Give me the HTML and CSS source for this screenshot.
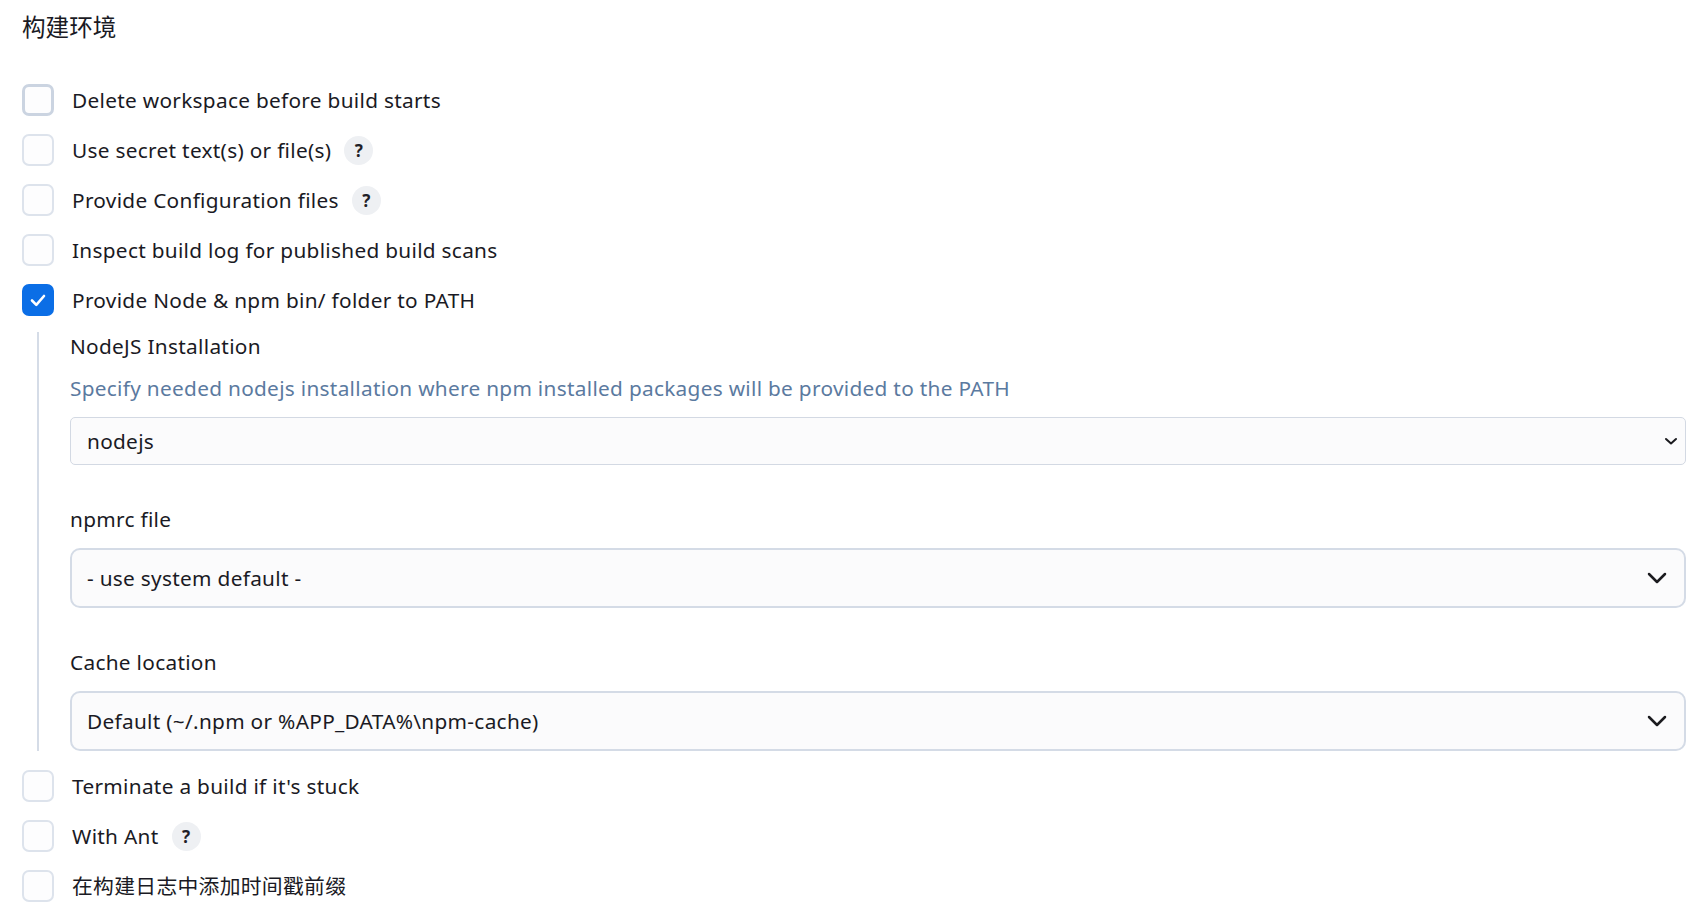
FILE: index.html
```html
<!DOCTYPE html>
<html lang="zh-CN">
<head>
<meta charset="utf-8">
<title>构建环境</title>
<link rel="stylesheet" href="styles.css">
</head>
<body>
<div class="page">
  <h2 class="title">构建环境</h2>
  <div class="options">
    <div class="row">
      <span class="box box-focus"></span>
      <span class="label">Delete workspace before build starts</span>
    </div>
    <div class="row">
      <span class="box"></span>
      <span class="label">Use secret text(s) or file(s)</span>
      <span class="help">?</span>
    </div>
    <div class="row">
      <span class="box"></span>
      <span class="label">Provide Configuration files</span>
      <span class="help">?</span>
    </div>
    <div class="row">
      <span class="box"></span>
      <span class="label">Inspect build log for published build scans</span>
    </div>
    <div class="row">
      <span class="box box-checked">
        <svg viewBox="0 0 32 32" width="32" height="32"><path d="M10 16.5l4.3 4.3 7.7-8.8" fill="none" stroke="#fff" stroke-width="2.6" stroke-linecap="round" stroke-linejoin="round"/></svg>
      </span>
      <span class="label">Provide Node &amp; npm bin/ folder to PATH</span>
    </div>

    <div class="nested">
      <div class="field-label">NodeJS Installation</div>
      <div class="field-help">Specify needed nodejs installation where npm installed packages will be provided to the PATH</div>
      <div class="select select-small">
        <span>nodejs</span>
        <svg viewBox="0 0 14 10" width="14" height="10"><path d="M2 3l5 4.5 5-4.5" fill="none" stroke="#1b1b1f" stroke-width="2" stroke-linecap="round" stroke-linejoin="round"/></svg>
      </div>

      <div class="field-label field-gap">npmrc file</div>
      <div class="select select-large">
        <span>- use system default -</span>
        <svg viewBox="0 0 20 12" width="20" height="12"><path d="M2 2l8 8 8-8" fill="none" stroke="#1b1b1f" stroke-width="2.5" stroke-linecap="round" stroke-linejoin="round"/></svg>
      </div>

      <div class="field-label field-gap">Cache location</div>
      <div class="select select-large">
        <span>Default (~/.npm or %APP_DATA%\npm-cache)</span>
        <svg viewBox="0 0 20 12" width="20" height="12"><path d="M2 2l8 8 8-8" fill="none" stroke="#1b1b1f" stroke-width="2.5" stroke-linecap="round" stroke-linejoin="round"/></svg>
      </div>
    </div>

    <div class="row row-after">
      <span class="box"></span>
      <span class="label">Terminate a build if it's stuck</span>
    </div>
    <div class="row">
      <span class="box"></span>
      <span class="label">With Ant</span>
      <span class="help">?</span>
    </div>
    <div class="row">
      <span class="box"></span>
      <span class="label">在构建日志中添加时间戳前缀</span>
    </div>
  </div>
</div>
</body>
</html>
```

FILE: styles.css
```css
* {
  box-sizing: border-box;
}

html, body {
  margin: 0;
  padding: 0;
  background: #ffffff;
}

body {
  font-family: "Noto Sans", "Noto Sans CJK SC", sans-serif;
  font-size: 20.8px;
  letter-spacing: 0.3px;
  color: #1a1a24;
}

.page {
  padding: 12px 20px 0 22px;
}

.title {
  margin: 0;
  font-size: 23.6px;
  font-weight: 400;
  line-height: 30px;
  letter-spacing: 0;
  color: #1a1a24;
}

.options {
  margin-top: 33px;
  display: flex;
  flex-direction: column;
}

.row {
  height: 50px;
  display: flex;
  align-items: center;
}

.box {
  width: 32px;
  height: 32px;
  flex: 0 0 32px;
  border: 2px solid #dde3ec;
  border-radius: 7px;
  background: #fdfdfe;
  margin-right: 18px;
  display: flex;
  align-items: center;
  justify-content: center;
}

.box-focus {
  border: 3px solid #cbd4e1;
}

.box-checked {
  background: #0b6ee6;
  border-color: #0b6ee6;
}

.box-checked svg {
  flex: 0 0 auto;
}

.label {
  line-height: 28px;
  white-space: nowrap;
}

.help {
  margin-left: 13px;
  width: 29px;
  height: 29px;
  border-radius: 50%;
  background: #eef0f3;
  display: flex;
  align-items: center;
  justify-content: center;
  font-size: 17px;
  font-weight: 700;
  letter-spacing: 0;
  color: #1f1f28;
}

.nested {
  margin-top: 7px;
  margin-left: 15px;
  border-left: 2px solid #d5dce7;
  padding-left: 31px;
  display: flex;
  flex-direction: column;
}

.field-label {
  line-height: 28px;
}

.field-gap {
  margin-top: 40px;
}

.field-help {
  margin-top: 14px;
  line-height: 28px;
  color: #5b7aa0;
}

.select {
  display: flex;
  align-items: center;
  justify-content: space-between;
  background: #fbfbfc;
  margin-top: 15px;
}

.select-small {
  height: 48px;
  border: 1px solid #d3d9e3;
  border-radius: 5px;
  padding: 0 7px 0 16px;
}

.select-large {
  height: 60px;
  border: 2px solid #d4dbe6;
  border-radius: 10px;
  padding: 0 17px 0 15px;
}

.row-after {
  margin-top: 10px;
}
```
